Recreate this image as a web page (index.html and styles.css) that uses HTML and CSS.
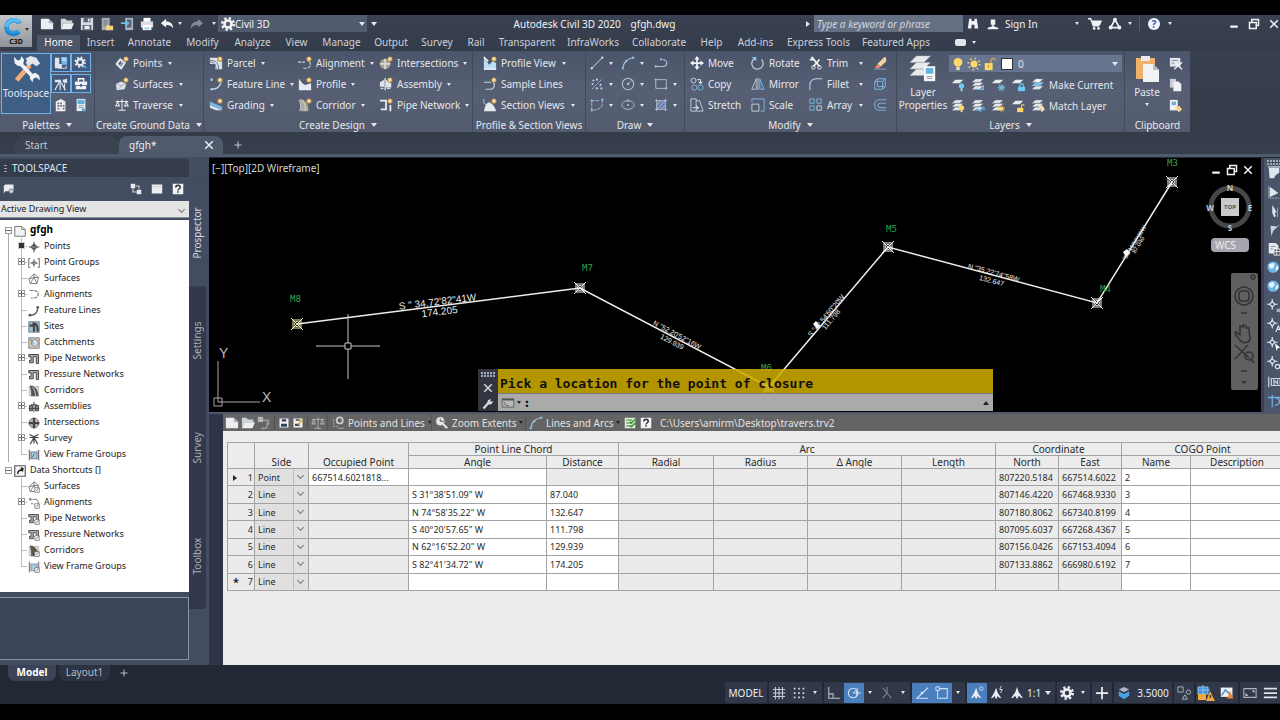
FILE: index.html
```html
<!DOCTYPE html>
<html lang="en">
<head>
<meta charset="utf-8">
<title>Autodesk Civil 3D 2020 - gfgh.dwg</title>
<link rel="stylesheet" href="styles.css">
</head>
<body>
<svg class="defs" aria-hidden="true">
<defs>
<g id="star"><circle cx="12.500" cy="3.500" r="3" fill="#b98f52"/><circle cx="12.500" cy="3.500" r="2" fill="#ffe09a"/></g>
<symbol id="new" viewBox="0 0 16 16"><path d="M1 2h9l5 5v7H1z" fill="#eceef1"/><path d="M10 2v5h5" fill="#aeb4bf"/></symbol>
<symbol id="open" viewBox="0 0 16 16"><path d="M1 14V2h5l2 2h6v3H4z" fill="#cfd3da"/><path d="M4 7h12l-3 7H1z" fill="#eceef1"/></symbol>
<symbol id="save" viewBox="0 0 16 16"><path d="M1 1h14v14H1z" fill="#d9dce2"/><path d="M4 1h8v5H4zM3 9h10v6H3z" fill="#59606d"/><path d="M5 10h6v4H5zM9 2h2v3H9z" fill="#eceef1"/></symbol>
<symbol id="saveas" viewBox="0 0 16 16"><path d="M2 1h9v14H2z" fill="#a9adb5"/><path d="M4 3h5v8H4z" fill="#8a8f99"/><path d="M7 9h3l1 1h4v5H7z" fill="#f2d27c"/></symbol>
<symbol id="webopen" viewBox="0 0 16 16"><path d="M6 1h9v14H6z" fill="#a9b3c2"/><path d="M8 3h5v9H8z" fill="#596273"/><path d="M1 6h5V3l5 4-5 4V8H1z" fill="#79b7e8"/></symbol>
<symbol id="print" viewBox="0 0 16 16"><path d="M4 1h8v5H4z" fill="#fff"/><path d="M1 5h14v7H1z" fill="#d8dbe1"/><path d="M3 9h10v6H3z" fill="#fff"/><path d="M5 12h6v2H5z" fill="#8ed0ee"/></symbol>
<symbol id="undo" viewBox="0 0 16 16"><path d="M1 7l6-5v3c5 0 8 3 8 8-2-3-4-4-8-4v3z" fill="currentColor"/></symbol>
<symbol id="redo" viewBox="0 0 16 16"><path d="M15 7L9 2v3c-5 0-8 3-8 8 2-3 4-4 8-4v3z" fill="currentColor"/></symbol>
<symbol id="gear" viewBox="0 0 16 16"><circle cx="8" cy="8" r="4" fill="none" stroke="currentColor" stroke-width="3"/><circle cx="8" cy="8" r="6.500" fill="none" stroke="currentColor" stroke-width="3" stroke-dasharray="2.600 2.500"/></symbol>
<symbol id="c3d" viewBox="0 0 24 24"><path d="M19 8C17 3 6 3 5 12c0 9 11 9 13 5" fill="none" stroke="#1b84cf" stroke-width="5"/><path d="M19 7C15 2 6 4 5 12" fill="none" stroke="#55bdf2" stroke-width="4"/><path d="M5 12c1 6 8 7 13 4" fill="none" stroke="#2d9be0" stroke-width="3"/></symbol>
<symbol id="binoc" viewBox="0 0 16 16"><path d="M3 1h3v3h4V1h3l2 13h-5V9H6v5H1z" fill="currentColor"/></symbol>
<symbol id="user" viewBox="0 0 16 16"><path d="M5 2h6v7H9v2l6 2v2H1v-2l6-2V9H5z" fill="currentColor"/></symbol>
<symbol id="cart" viewBox="0 0 16 16"><path d="M0 2h3l3 8h7" fill="none" stroke="currentColor" stroke-width="1.500"/><path d="M4 4h12l-2 5H6z" fill="currentColor"/><circle cx="7" cy="13" r="1.500" fill="currentColor"/><circle cx="12" cy="13" r="1.500" fill="currentColor"/></symbol>
<symbol id="a360" viewBox="0 0 16 16"><path d="M8 3l5 9H3z" fill="none" stroke="currentColor" stroke-width="2"/><circle cx="8" cy="3" r="2.200" fill="currentColor"/><circle cx="13" cy="12" r="2.200" fill="currentColor"/><circle cx="3" cy="12" r="2.200" fill="currentColor"/></symbol>
<symbol id="min" viewBox="0 0 16 16"><path d="M3 10h10v3H3z" fill="currentColor"/></symbol>
<symbol id="restore" viewBox="0 0 16 16"><path d="M5 5V2h9v8h-3M2 6h9v8H2z" fill="none" stroke="currentColor" stroke-width="2"/></symbol>
<symbol id="close" viewBox="0 0 16 16"><path d="M3 3l10 10M13 3L3 13" stroke="currentColor" stroke-width="2"/></symbol>
<symbol id="plus" viewBox="0 0 16 16"><path d="M8 1v14M1 8h14" stroke="currentColor" stroke-width="2"/></symbol>
<symbol id="tools" viewBox="0 0 32 32"><path d="M6 28L20 12" stroke="#f0ad7b" stroke-width="5"/><path d="M15 5l6-3 6 2 4 6-4 3-4-3-4 3-3-3 1-4z" fill="#e3e7ed"/><path d="M9 9l15 16" stroke="#eef1f5" stroke-width="4"/><path d="M3 3l4 4 3-1 1-4 3 4-1 5-5 2-4-3zM21 22l5-2 4 3 1 5-4-3-3 1-1 4-3-4z" fill="#eef1f5"/></symbol>
<symbol id="prosp" viewBox="0 0 16 16"><path d="M1 2h5v7h3v5H1z" fill="#dfe5ee"/><path d="M8 1h7v9H9z" fill="#74b8ea"/><path d="M9 3h5M9 5h5M5 14h9v-3" stroke="#e9eef5" fill="none"/></symbol>
<symbol id="sett" viewBox="0 0 16 16"><circle cx="7" cy="7" r="3.500" fill="none" stroke="#e6ebf2" stroke-width="2.500"/><circle cx="7" cy="7" r="5.500" fill="none" stroke="#e6ebf2" stroke-width="2" stroke-dasharray="2.200 2.100"/><path d="M10 10l4 4" stroke="#62ade6" stroke-width="2"/></symbol>
<symbol id="survey" viewBox="0 0 16 16"><path d="M1 3h7v3H1zM10 3l5-1v5l-5-1z" fill="#dfe5ee"/><path d="M6 6L1 15M7 6v9M8 6l5 9M12 7v8" stroke="#dfe5ee" stroke-width="1.300"/></symbol>
<symbol id="tbox" viewBox="0 0 16 16"><path d="M5 5V2h6v3" fill="none" stroke="#fff" stroke-width="1.500"/><path d="M1 5h14v4H1zM2 10h12v4H2z" fill="#eef1f5"/><path d="M7 8h2v3H7z" fill="#3c5a80"/></symbol>
<symbol id="sheet" viewBox="0 0 16 16"><path d="M2 4l6-3 5 3v11H2z" fill="#eef0f3"/><path d="M4 5h2v2H4zM7 5h2v2H7zM4 8h2v2H4zM7 8h2v2H7zM4 11h2v2H4zM10 8h2v2h-2zM10 11h2v2h-2z" fill="#687184"/></symbol>
<symbol id="props" viewBox="0 0 16 16"><path d="M3 1h10v14H3z" fill="#eef0f3"/><path d="M4 2h8v5H4z" fill="#5fb1e0"/><path d="M5 9h6M5 11h6" stroke="#8791a1"/><path d="M9 12h4v3H9z" fill="#58a5dc"/></symbol>
<symbol id="point" viewBox="0 0 16 16"><path d="M2 9l4-5 5 4-4 6z" fill="none" stroke="#dfe3ea" stroke-width="2.500"/><path d="M5 11l3-2-1-2" stroke="#dfe3ea" fill="none"/><use href="#star"/></symbol>
<symbol id="surf" viewBox="0 0 16 16"><path d="M1 8l6-3 6 3-2 6-9 1z" fill="#dfe3ea"/><path d="M1 8l6 2 6-2M7 10l-3 4" stroke="#a4abba" fill="none"/><use href="#star"/></symbol>
<symbol id="scales" viewBox="0 0 16 16"><path d="M8 1v13M4 14h8M1 4h14M3 4l-2 5h4zM13 4l-2 5h4z" stroke="currentColor" fill="none" stroke-width="1.200"/></symbol>
<symbol id="parcel" viewBox="0 0 16 16"><path d="M1 2h9v4h5v9H7V9H1z" fill="#dfe3ea"/><path d="M1 5c7 0 10 3 10 10M1 7c5 0 7 3 7 8" stroke="#5e6779" fill="none"/><use href="#star"/></symbol>
<symbol id="fline" viewBox="0 0 16 16"><path d="M3 14c7 0 10-3 11-9" stroke="#c9d0dc" fill="none" stroke-width="1.500"/><circle cx="3" cy="3" r="1.500" fill="#9ed0f3"/><circle cx="3" cy="14" r="1.500" fill="#9ed0f3"/><use href="#star"/></symbol>
<symbol id="grading" viewBox="0 0 16 16"><path d="M1 4l14 6v4L1 8z" fill="#74b8e6"/><path d="M1 8l14 6H8L1 11z" fill="#d9e6f2"/><use href="#star"/></symbol>
<symbol id="align" viewBox="0 0 16 16"><path d="M0 7h8M6 14h4c6-1 5-8 1-8" stroke="#c9d0dc" fill="none" stroke-width="1.300" stroke-dasharray="4 1"/><use href="#star"/></symbol>
<symbol id="profile" viewBox="0 0 16 16"><path d="M1 2l4 5 3 2 7-2v8H1z" fill="#e6eaf0"/><use href="#star"/></symbol>
<symbol id="corr" viewBox="0 0 16 16"><path d="M2 1l4 1c5 3 6 7 6 13H3c1-5 0-9-1-14z" fill="#aaa99f"/><path d="M4 2c4 4 5 8 4 13" stroke="#e8dcae" fill="none"/><path d="M1 2c2 3 3 8 1 13" stroke="#dfe3ea" fill="none"/><use href="#star"/></symbol>
<symbol id="inter" viewBox="0 0 16 16"><circle cx="7" cy="9" r="6" fill="#a8a39b"/><path d="M7 3v12M1 9h12" stroke="#ddd8cc" stroke-width="2"/><use href="#star"/></symbol>
<symbol id="assem" viewBox="0 0 16 16"><path d="M1 6l5-3v8H1zM8 3l6 4v5H8z" fill="#dfe3ea"/><path d="M7 1v14M2 13h3M9 13h4" stroke="#dfe3ea" stroke-width="1.500"/><use href="#star"/></symbol>
<symbol id="pipe" viewBox="0 0 16 16"><path d="M1 3h7v10H2M13 8v7" stroke="#e9ecf1" stroke-width="2" fill="none"/><use href="#star"/></symbol>
<symbol id="pview" viewBox="0 0 16 16"><path d="M1 1v14h14V8l-4-2-4 4z" fill="#bcdff5"/><path d="M1 1l5 5M1 15h14" stroke="#fff" stroke-width="1.500"/><use href="#star"/></symbol>
<symbol id="sline" viewBox="0 0 16 16"><path d="M1 6h8M3 14h6c5-1 5-7 2-8" stroke="#c9d0dc" fill="none" stroke-width="1.300"/><use href="#star"/></symbol>
<symbol id="sview" viewBox="0 0 16 16"><path d="M1 15c2-9 4-10 6-10s6 3 8 10z" fill="#e6eaf0"/><path d="M1 1v5l3 2" stroke="#a7d4f1" fill="none"/><use href="#star"/></symbol>
<symbol id="line" viewBox="0 0 16 16"><path d="M2 14L14 2" stroke="#b9c1ce" stroke-width="1.200"/><circle cx="2" cy="14" r="1.300" fill="#cfe1f1"/><circle cx="14" cy="2" r="1.300" fill="#cfe1f1"/></symbol>
<symbol id="arc" viewBox="0 0 16 16"><path d="M2 14C3 7 7 3 14 2" stroke="#b9c1ce" stroke-width="1.200" fill="none"/><circle cx="2" cy="14" r="1.300" fill="#8cc5f0"/><circle cx="6" cy="6" r="1.300" fill="#8cc5f0"/><circle cx="14" cy="2" r="1.300" fill="#8cc5f0"/></symbol>
<symbol id="pline" viewBox="0 0 16 16"><path d="M1 12h9c6 0 6-7 0-8" stroke="#b9c1ce" stroke-width="1.300" fill="none"/><circle cx="2" cy="12" r="1.300" fill="#8cc5f0"/><circle cx="8" cy="4" r="1.300" fill="#8cc5f0"/></symbol>
<symbol id="pts" viewBox="0 0 16 16"><path d="M2 14L14 2" stroke="#b9c1ce" stroke-dasharray="3 1"/><g fill="#b5d4ed"><circle cx="4" cy="4" r="1.200"/><circle cx="8" cy="3" r="1.200"/><circle cx="3" cy="8" r="1.200"/><circle cx="12" cy="9" r="1.200"/><circle cx="8" cy="13" r="1.200"/><circle cx="13" cy="13" r="1.200"/></g></symbol>
<symbol id="circ" viewBox="0 0 16 16"><circle cx="8" cy="8" r="6.500" stroke="#b9c1ce" fill="none" stroke-width="1.200"/><path d="M8 8l4-4" stroke="#8cc5f0"/><circle cx="8" cy="8" r="1.200" fill="#cfe1f1"/></symbol>
<symbol id="rect" viewBox="0 0 16 16"><path d="M2 3h12v10H2z" stroke="#b9c1ce" fill="none"/><circle cx="2" cy="3" r="1.300" fill="#8cc5f0"/><circle cx="14" cy="13" r="1.300" fill="#8cc5f0"/></symbol>
<symbol id="poly3" viewBox="0 0 16 16"><path d="M2 14V3h8M14 2v5c-1 5-5 7-12 7" stroke="#b9c1ce" fill="none" stroke-dasharray="4 1"/><circle cx="2" cy="3" r="1.300" fill="#8cc5f0"/><circle cx="14" cy="2" r="1.300" fill="#8cc5f0"/><circle cx="2" cy="14" r="1.300" fill="#8cc5f0"/></symbol>
<symbol id="ellipse" viewBox="0 0 16 16"><ellipse cx="8" cy="8" rx="7" ry="5" stroke="#b9c1ce" fill="none"/><circle cx="8" cy="8" r="1.200" fill="#8cc5f0"/><circle cx="8" cy="3" r="1.200" fill="#8cc5f0"/></symbol>
<symbol id="hatch" viewBox="0 0 16 16"><path d="M3 3h10v10H3z" fill="#6a7fae"/><path d="M3 8l5-5M3 13L13 3M8 13l5-5" stroke="#a9bbe4"/><path d="M3 1v14M13 1v14M1 3h14M1 13h14" stroke="#b9c1ce"/></symbol>
<symbol id="move" viewBox="0 0 16 16"><path d="M8 0l3 4H9v3h3V5l4 3-4 3V9H9v3h2l-3 4-3-4h2V9H4v2L0 8l4-3v2h3V4H5z" fill="#f0f3f7"/></symbol>
<symbol id="copy" viewBox="0 0 16 16"><circle cx="4" cy="4" r="2.800" stroke="#d3d8e0" fill="none"/><circle cx="5" cy="12" r="3" stroke="#7fbcec" fill="none"/><circle cx="12" cy="12" r="3" stroke="#7fbcec" fill="none"/><path d="M8 3h4v4M10 5l2 3 2-3" stroke="#e8ebf0" fill="none"/></symbol>
<symbol id="stretch" viewBox="0 0 16 16"><path d="M1 1h6v14H1zM7 3h4l4 12H7" stroke="#c6d3e2" fill="none"/><path d="M3 11h7M7 9l3 2-3 2" stroke="#e8ebf0" fill="none"/></symbol>
<symbol id="rotate" viewBox="0 0 16 16"><path d="M4 3a6.500 6.500 0 1 0 8 1" stroke="#c6cdd8" fill="none" stroke-width="1.400"/><path d="M1 1h5v5z" fill="#8cc5f0"/></symbol>
<symbol id="mirror" viewBox="0 0 16 16"><path d="M6 2L1 14h5zM8 1v14" stroke="#c6cdd8" fill="none"/><path d="M10 2l5 12h-5z" stroke="#7fbcec" fill="#44739c"/></symbol>
<symbol id="scale" viewBox="0 0 16 16"><path d="M1 7h8v8H1z" stroke="#d3d8e0" fill="none"/><path d="M1 5V1h14v14h-4" stroke="#7fbcec" fill="none"/></symbol>
<symbol id="trim" viewBox="0 0 16 16"><path d="M3 1l9 11M12 4l-7 8M1 4h4" stroke="#f1f3f6" stroke-width="2"/><circle cx="12" cy="13" r="2" stroke="#f1f3f6" fill="none"/><circle cx="5" cy="13" r="2" stroke="#f1f3f6" fill="none"/></symbol>
<symbol id="fillet" viewBox="0 0 16 16"><path d="M1 15V9c0-5 4-7 8-7h6" stroke="#c6cdd8" fill="none" stroke-width="1.200"/><path d="M1 9c0-5 4-7 8-7" stroke="#7fbcec" fill="none"/></symbol>
<symbol id="array" viewBox="0 0 16 16"><path d="M1 1h5v5H1zM9 1h5v5H9zM1 9h5v5H1z" stroke="#7fbcec" fill="none"/><path d="M9 9h5v5H9z" stroke="#d3d8e0" fill="none"/></symbol>
<symbol id="erase" viewBox="0 0 16 16"><path d="M13 1l2 1v4l-6 6-4-3z" fill="#f6d19c"/><path d="M5 9l4 3-2 2H2z" fill="#e4896a"/><path d="M2 15h13" stroke="#8aa8cc"/></symbol>
<symbol id="explode" viewBox="0 0 16 16"><path d="M2 5h9v9H2zM2 5l3-3h9v9l-3 3M11 5l3-3M5 2v9M5 11h9" stroke="#7fbcec" fill="none"/></symbol>
<symbol id="offset" viewBox="0 0 16 16"><path d="M15 2H7c-7 0-7 12 0 12h8M15 6H8c-3 0-3 5 0 5h7" stroke="#7fa6d0" fill="none" stroke-width="1.300"/></symbol>
<symbol id="layerbig" viewBox="0 0 32 32"><path d="M9 2h15l-7 7H2zM9 9h15l-7 7H2zM9 16h15l-7 7H2z" fill="#e8e9eb" stroke="#9da3ae" stroke-width=".5"/><path d="M17 13h12v16H17z" fill="#f6f7f8"/><path d="M19 15h8v6h-8z" fill="#5fb1e0"/><path d="M20 24h6M20 26h6" stroke="#8d95a3"/></symbol>
<symbol id="bulb" viewBox="0 0 16 16"><circle cx="8" cy="6" r="5" fill="#ffd867"/><path d="M6 11h4v4H6z" fill="#e0d9b5"/></symbol>
<symbol id="sun" viewBox="0 0 16 16"><circle cx="8" cy="8" r="4" fill="#ffd867"/><circle cx="8" cy="8" r="6.500" fill="none" stroke="#ffd867" stroke-width="2" stroke-dasharray="1.500 3.600"/></symbol>
<symbol id="lock" viewBox="0 0 16 16"><path d="M9 7V4c0-3 5-3 5 0" stroke="#e2a05a" fill="none" stroke-width="1.500"/><path d="M2 7h9v8H2z" fill="#ffd867"/><path d="M6 9v3" stroke="#a87b26"/></symbol>
<g id="sheet1"><path d="M5 2h9l-4 4H1z" fill="#e8e9eb"/></g>
<g id="stack"><path d="M5 1h9l-4 4H1zM5 5h9l-4 4H1zM5 9h9l-4 4H1z" fill="#e8e9eb" stroke="#6c7486" stroke-width=".6"/></g>
<symbol id="l1" viewBox="0 0 16 16"><use href="#sheet1"/><circle cx="12" cy="9" r="3" fill="#6bcdf5"/><path d="M11 12h2v3h-2z" fill="#b9e2f5"/></symbol>
<symbol id="l2" viewBox="0 0 16 16"><use href="#stack"/><path d="M8 13h6V8" stroke="#7cc3f2" fill="none" stroke-width="1.500"/></symbol>
<symbol id="l3" viewBox="0 0 16 16"><use href="#sheet1"/><path d="M12 7v8M8 11h8M9 8l6 6M15 8l-6 6" stroke="#6bb6de" stroke-width="1.300"/></symbol>
<symbol id="l4" viewBox="0 0 16 16"><use href="#sheet1"/><path d="M10 10V8c0-2 4-2 4 0v2" stroke="#6bcdf5" fill="none" stroke-width="1.300"/><path d="M8 10h8v5H8z" fill="#6bcdf5"/></symbol>
<symbol id="l5" viewBox="0 0 16 16"><use href="#stack"/><path d="M5 5h9l-4 4H1z" fill="#79bff0"/><circle cx="8" cy="3" r="2" fill="#fff"/></symbol>
<symbol id="l6" viewBox="0 0 16 16"><use href="#stack"/><circle cx="12" cy="10" r="3" fill="#ffd867"/><path d="M11 13h2v2h-2z" fill="#fff1bd"/></symbol>
<symbol id="l7" viewBox="0 0 16 16"><use href="#stack"/><path d="M5 12h4M10 15l5-6M15 9v4" stroke="#5ba6e2" fill="none" stroke-width="1.500"/></symbol>
<symbol id="l8" viewBox="0 0 16 16"><use href="#stack"/><circle cx="12" cy="11" r="2.500" fill="#ffd867"/><circle cx="12" cy="11" r="3.700" stroke="#ffd867" fill="none" stroke-dasharray="1 2"/></symbol>
<symbol id="l9" viewBox="0 0 16 16"><use href="#sheet1"/><path d="M12 10V8c0-2 3-2 3 0" stroke="#ffb765" fill="none" stroke-width="1.300"/><path d="M7 10h7v5H7z" fill="#ffd867"/></symbol>
<symbol id="l10" viewBox="0 0 16 16"><use href="#stack"/><path d="M9 8l4-1 3 5-4 3z" fill="#f0dfb6"/></symbol>
<symbol id="paste" viewBox="0 0 24 28"><path d="M1 3h19v21H1z" fill="#f0b06a"/><path d="M6 1h9v5H6z" fill="#e8eaee"/><path d="M8 9h10l6 6v12H8z" fill="#f1f2f4"/><path d="M18 9v6h6z" fill="#b6bcc6"/></symbol>
<symbol id="cut" viewBox="0 0 16 16"><path d="M1 1h12v10H1z" fill="#dfe3ea"/><path d="M3 4h7M3 7h5" stroke="#7d8697"/><path d="M6 6l9 8M15 6l-9 8" stroke="#f6f7f9" stroke-width="1.500"/></symbol>
<symbol id="copyc" viewBox="0 0 16 16"><path d="M1 1h7v10H1z" fill="#c8cdd6"/><path d="M5 4h6l3 3v8H5z" fill="#f1f2f4"/></symbol>
<symbol id="pspec" viewBox="0 0 16 16"><path d="M1 1h9v12H1z" fill="#eef0f3"/><path d="M3 3h5v4H3z" fill="#6ab2e6"/><path d="M7 9l5-1 3 4-4 3z" fill="#f3d48c"/></symbol>
<symbol id="t-doc" viewBox="0 0 16 16"><path d="M1 2h9l5 4v9H1z" fill="#f4f4f4" stroke="#777" stroke-width="1.300"/><path d="M10 2v4h5" stroke="#777" fill="none"/></symbol>
<symbol id="t-point" viewBox="0 0 16 16"><path d="M8 1v14M1 8h14M8 4l4 4-4 4-4-4z" stroke="#555" fill="none" stroke-width="1.500"/></symbol>
<symbol id="t-pg" viewBox="0 0 16 16"><path d="M3 2H1v12h2M13 2h2v12h-2M8 3v10M3 8h10M8 5l3 3-3 3-3-3z" stroke="#666" fill="none" stroke-width="1.300"/></symbol>
<symbol id="t-surf" viewBox="0 0 16 16"><path d="M8 1l6 5-2 8H3L1 8zM1 8l7-2 6 0M8 1v5l4 8M8 6l-5 8" stroke="#777" fill="none" stroke-width="1.200"/></symbol>
<symbol id="t-align" viewBox="0 0 16 16"><path d="M2 2h5c9 0 9 10 0 10H4" stroke="#777" fill="none" stroke-width="1.500" stroke-dasharray="5 1"/></symbol>
<symbol id="t-fl" viewBox="0 0 16 16"><path d="M2 14c8 0 11-4 11-11" stroke="#555" fill="none" stroke-width="1.800"/><circle cx="2.500" cy="13.500" r="1.800" fill="#555"/><circle cx="13" cy="3" r="1.800" fill="#555"/></symbol>
<symbol id="t-site" viewBox="0 0 16 16"><path d="M1 1h14v14H1z" fill="#9dc0d8" stroke="#666"/><path d="M2 6h6v8M6 3c6 0 7 4 7 11" stroke="#444" fill="none" stroke-width="3"/></symbol>
<symbol id="t-catch" viewBox="0 0 16 16"><path d="M1 1h14v14H1z" fill="#e8c69c" stroke="#4d6f93"/><circle cx="9" cy="8" r="4.500" fill="#d3e5f3" stroke="#55799c"/><path d="M3 2l5 8" stroke="#55799c"/></symbol>
<symbol id="t-pipe" viewBox="0 0 16 16"><path d="M1 2h13v12h-3V5H7v8H2v-3h2V5H1z" fill="#aaa" stroke="#444" stroke-width="1.300"/></symbol>
<symbol id="t-corr" viewBox="0 0 16 16"><path d="M1 1h14v14H1z" fill="#ccc"/><path d="M2 1h4c6 4 8 8 8 14H4c1-5 0-10-2-14z" fill="#555"/><path d="M6 3c3 4 4 7 4 12" stroke="#eee" fill="none"/></symbol>
<symbol id="t-assem" viewBox="0 0 16 16"><path d="M2 6h4v7H2zM10 6h4v7h-4zM8 1v14M4 5h8M1 10h14" fill="#888" stroke="#444" stroke-width="1.300"/></symbol>
<symbol id="t-inter" viewBox="0 0 16 16"><circle cx="8" cy="8" r="6.500" fill="#bbb" stroke="#555"/><path d="M8 1v14M1 8h14" stroke="#444" stroke-width="3"/></symbol>
<symbol id="t-survey" viewBox="0 0 16 16"><path d="M2 2l6 3 6-3M2 6h12M8 6l-5 9M8 6v8M8 6l5 9" stroke="#444" fill="none" stroke-width="1.600"/></symbol>
<symbol id="t-vfg" viewBox="0 0 16 16"><path d="M2 1v14M14 1v14" stroke="#777" stroke-width="2"/><path d="M4 4h8v9H4z" fill="#a9cde2" stroke="#557"/><path d="M5 12l4-6" stroke="#446"/></symbol>
<symbol id="t-short" viewBox="0 0 16 16"><path d="M1 1h14v14H1z" fill="#f7f7f7" stroke="#555" stroke-width="1.500"/><path d="M4 12c0-4 2-6 5-6V3l4 1-1 5-2-1c-3 0-4 1-4 4z" fill="#222"/></symbol>
<g id="badge"><path d="M9 9h6v6H9z" fill="#fff" stroke="#666"/><path d="M11 13l3-3" stroke="#444"/></g>
<symbol id="d-surf" viewBox="0 0 16 16"><path d="M8 1l6 5-2 8H3L1 8zM1 8l7-2 6 0M8 1v5l4 8M8 6l-5 8" stroke="#777" fill="none" stroke-width="1.200"/><use href="#badge"/></symbol>
<symbol id="d-align" viewBox="0 0 16 16"><path d="M1 3h9M3 1v4M9 3c4 0 5 3 5 6M4 9h3" stroke="#777" fill="none" stroke-width="1.400" stroke-dasharray="5 1"/><use href="#badge"/></symbol>
<symbol id="d-pipe" viewBox="0 0 16 16"><path d="M1 2h13v12h-3V5H7v8H2v-3h2V5H1z" fill="#aaa" stroke="#555" stroke-width="1.300"/><use href="#badge"/></symbol>
<symbol id="d-corr" viewBox="0 0 16 16"><path d="M1 1h14v14H1z" fill="#ccc"/><path d="M2 1h4c6 4 8 8 8 14H4c1-5 0-10-2-14z" fill="#5c5746"/><use href="#badge"/></symbol>
<symbol id="d-vfg" viewBox="0 0 16 16"><path d="M2 1v14M14 1v14" stroke="#888" stroke-width="2"/><path d="M4 4h8v9H4z" fill="#a9cde2" stroke="#779"/><use href="#badge"/></symbol>
<symbol id="help" viewBox="0 0 16 16"><path d="M1 1h14v14H1z" fill="#f3f4f6"/><path d="M5 6c0-4 6-4 6 0 0 2-3 2-3 4M8 11v2" stroke="#2e3340" stroke-width="2" fill="none"/></symbol>
<symbol id="tree2" viewBox="0 0 16 16"><path d="M1 1h6v6H1zM9 9h6v6H9z" fill="#e8ebf0"/><path d="M4 7v5h5M8 4h4v4" stroke="#c9ced8" fill="none" stroke-width="1.500"/></symbol>
<symbol id="pane" viewBox="0 0 16 16"><path d="M1 2h14v12H1z" fill="#eceef2"/><path d="M2 5h12" stroke="#b9bec8"/></symbol>
<symbol id="refresh" viewBox="0 0 16 16"><path d="M3 2h11v9H3l-2 3V4z" fill="#e8ebf0"/><circle cx="11" cy="11" r="3" fill="#cfd5df" stroke="#535c6f"/></symbol>
<symbol id="link" viewBox="0 0 16 16"><path d="M1 1h6v6H1z" fill="#b5b5b5"/><path d="M7 5h6v5M5 14h4c3 0 3-4 3-7" stroke="#9a9a9a" fill="none" stroke-width="2"/></symbol>
<symbol id="disk" viewBox="0 0 16 16"><path d="M2 2h12v12H2z" fill="#f1f1f1"/><path d="M5 3h6v3H5zM4 9h8v4H4z" fill="#34445e"/></symbol>
<symbol id="diskp" viewBox="0 0 16 16"><path d="M2 2h12v12H2z" fill="#f1f1f1"/><path d="M4 9h6v3H4zM5 3h5v2H5z" fill="#444"/><path d="M8 10l6-7" stroke="#e4b13f" stroke-width="2.500"/></symbol>
<symbol id="plset" viewBox="0 0 16 16"><path d="M3 3v9h5" stroke="#aaa" stroke-dasharray="3 1" fill="none"/><circle cx="10" cy="5" r="3.500" stroke="#ccc" fill="none" stroke-width="2"/><path d="M8 14h7" stroke="#aaa"/></symbol>
<symbol id="zoomx" viewBox="0 0 16 16"><circle cx="6" cy="6" r="4.500" fill="#e9e9e9" stroke="#cfcfcf"/><path d="M6 3v3h4" stroke="#444" fill="none"/><path d="M9 9l5 5" stroke="#ddd" stroke-width="2.500"/></symbol>
<symbol id="check" viewBox="0 0 16 16"><path d="M1 1h14v14H1z" fill="#e2efd9"/><path d="M3 4h8M3 8h8M3 12h8" stroke="#37843a" stroke-width="1.500"/><path d="M8 6l2 2 5-5M8 11l2 2 5-5" stroke="#2d9a34" stroke-width="2" fill="none"/></symbol>
<symbol id="wrench" viewBox="0 0 16 16"><path d="M2 14l7-8" stroke="currentColor" stroke-width="3"/><path d="M8 3l4-2-1 3 1 1 3-1-2 4-4 1-2-3z" fill="currentColor"/></symbol>
<symbol id="s-grid" viewBox="0 0 16 16"><path d="M4 1v14M8 1v14M12 1v14M1 4h14M1 8h14M1 12h14" stroke="#c6ccd6" stroke-width="1.200"/></symbol>
<symbol id="s-snap" viewBox="0 0 16 16"><path d="M2 3h12M2 8h12M2 13h12" stroke="#d0d5dd" stroke-width="2" stroke-dasharray="2 3"/></symbol>
<symbol id="s-ortho" viewBox="0 0 16 16"><path d="M2 1v13h13M2 9h5v5" stroke="#b9c0cb" fill="none" stroke-width="1.200"/></symbol>
<symbol id="s-polar" viewBox="0 0 16 16"><circle cx="7" cy="8" r="5.500" stroke="#d9e6f5" fill="none" stroke-width="1.200"/><path d="M7 8h9M7 8l6-6M11 5v6" stroke="#d9e6f5"/></symbol>
<symbol id="s-iso" viewBox="0 0 16 16"><path d="M3 2l10 12M8 1v7l-5 6" stroke="#828a97" fill="none" stroke-width="1.200"/></symbol>
<symbol id="s-otrack" viewBox="0 0 16 16"><path d="M15 2L2 14h13" stroke="#cfe2f7" fill="none" stroke-width="1.200"/><circle cx="8" cy="8" r="1.500" fill="#d9e6f5"/></symbol>
<symbol id="s-osnap" viewBox="0 0 16 16"><path d="M4 3h10v11H3V5" stroke="#cfe2f7" fill="none" stroke-width="1.200"/><path d="M1 1h4v4H1z" fill="#4a7ab8" stroke="#e6effa"/></symbol>
<symbol id="s-anno" viewBox="0 0 16 16"><path d="M8 1l2 6 5 7-3-1-2-2-2 4-2-4-2 2-3 1 5-7z" fill="#e9ecf1"/></symbol>
<symbol id="s-annov" viewBox="0 0 16 16"><path d="M7 2l2 6 4 6-3-1-1-2-2 4-2-4-1 2-3 1 4-7z" fill="#e9ecf1"/><circle cx="13" cy="3" r="2" stroke="#cfe2f7" fill="none"/></symbol>
<symbol id="s-annoa" viewBox="0 0 16 16"><path d="M7 2l2 6 4 6-3-1-1-2-2 4-2-4-1 2-3 1 4-7z" fill="#e9ecf1"/><path d="M13 0l-2 4h3l-2 4" stroke="#e9ecf1" fill="none"/></symbol>
<symbol id="s-lay" viewBox="0 0 16 16"><path d="M8 1l6 3-6 3-6-3z" fill="#aab4c2"/><path d="M2 6l6 3 6-3v5l-6 4-6-4z" fill="#4ba3e6"/></symbol>
<symbol id="s-units" viewBox="0 0 16 16"><path d="M1 1h6v6H1zM6 15l3-5 3 5z" stroke="#b9c0cb" fill="none"/><circle cx="13" cy="7" r="2.500" stroke="#b9c0cb" fill="none"/></symbol>
<symbol id="s-geo" viewBox="0 0 18 18"><path d="M1 3h10v7H1zM6 1v10M1 6h12" fill="#3f8ed8" stroke="#8bc3f0"/><path d="M1 10h8v6H1zM13 7l5 10H9z" fill="#f2a83c"/><path d="M13.500 11v3" stroke="#5b3712" stroke-width="1.500"/></symbol>
<symbol id="s-img" viewBox="0 0 18 18"><path d="M1 2h15v12H1z" fill="#f0f1f3"/><path d="M2 12l5-7 7 7" stroke="#4c93c9" stroke-width="2" fill="none"/><path d="M13 6l4 10h-8z" fill="#e98b3b"/></symbol>
<symbol id="s-clean" viewBox="0 0 16 16"><path d="M1 3h14v10H1z" stroke="#aab1bd" fill="none" stroke-width="1.200"/><path d="M10 5h3v3zM3 11V8l3 3z" fill="#e9ecf1"/></symbol>
<symbol id="s-menu" viewBox="0 0 16 16"><path d="M1 3h15M1 8h15M1 13h15" stroke="#dfe2e8" stroke-width="2"/></symbol>
<symbol id="r-1" viewBox="0 0 16 16"><path d="M2 2h12v6c-3 1-5 3-6 6H3z" fill="#dfe7ee"/><path d="M1 1h14" stroke="#fff"/></symbol>
<symbol id="r-2" viewBox="0 0 16 16"><path d="M3 2l10 7-10 5z" fill="#e3e8ee"/><path d="M2 1v14h13" stroke="#b3bcc9" stroke-dasharray="2 1" fill="none"/></symbol>
<symbol id="r-3" viewBox="0 0 16 16"><path d="M6 1l5 8-2 1 1 4-2 1-2-5z" fill="#dfe7ee"/><path d="M12 4v11" stroke="#8bb8dd"/></symbol>
<symbol id="r-4" viewBox="0 0 16 16"><path d="M4 3l8 1-5 5-2 6z" fill="#ccd4de"/><path d="M9 7l5-5" stroke="#8bb8dd"/></symbol>
<symbol id="r-5" viewBox="0 0 16 16"><path d="M2 1h8l3 3v9H2z" fill="#e6eaef"/><path d="M4 5h6M4 8h3" stroke="#7c8798"/><path d="M8 8h7v7H8zM11 8v7M8 11h7" fill="#4f596c" stroke="#eee"/></symbol>
<symbol id="r-6" viewBox="0 0 16 16"><circle cx="7" cy="7" r="6.500" fill="#6bb5e8"/><path d="M2 4l5-2 2 3-3 4-3-1zM10 7l3-2v4l-3 3z" fill="#e6f2fa"/></symbol>
<g id="cogo"><path d="M6 0v12M0 6h12" stroke="#e3e7ee" stroke-width="1.400"/><path d="M6 3l3 3-3 3-3-3z" fill="#4b5569" stroke="#e3e7ee" stroke-width="1.400"/></g>
<symbol id="r-7" viewBox="0 0 16 16"><use href="#cogo"/><path d="M11 11h4v4h-4z" fill="#9fb1c8"/></symbol>
<symbol id="r-7a" viewBox="0 0 16 16"><use href="#cogo"/><path d="M10 16l3-7 3 7M11 13h4" stroke="#dfe4eb" fill="none" stroke-width="1.300"/></symbol>
<symbol id="r-7b" viewBox="0 0 16 16"><use href="#cogo"/><path d="M9 7l6 5-3 1-1 3z" fill="#fff"/></symbol>
<symbol id="r-7c" viewBox="0 0 16 16"><use href="#cogo"/><circle cx="12" cy="12" r="2.500" stroke="#dfe4eb" fill="none" stroke-width="1.300"/></symbol>
<symbol id="r-8" viewBox="0 0 16 16"><path d="M2 2v12M5 4h10v8H5zM8 12V6l4 4V5" stroke="#c9d1dc" fill="none" stroke-width="1.400"/></symbol>
<symbol id="r-9" viewBox="0 0 16 16"><path d="M1 4h14M6 1v14M9 4c7 1 7 8 0 9" stroke="#72aee0" fill="none" stroke-width="1.500"/></symbol>
<g id="node"><path d="M-4 -4h8v8h-8zM-6 -6L6 6M6 -6L-6 6" fill="none" stroke="currentColor" stroke-width="1"/><circle r="2.500" fill="none" stroke="currentColor"/></g>
</defs>
</svg>

<div class="app">
<header class="titlebar">
  <button class="appmenu" aria-label="Application menu"><svg class="logo"><use href="#c3d"/></svg><b>C3D</b><i class="caret"></i></button>
  <div class="titlerow">
    <div class="qat">
      <button aria-label="New"><svg><use href="#new"/></svg></button>
      <button aria-label="Open"><svg><use href="#open"/></svg></button>
      <button aria-label="Save"><svg><use href="#save"/></svg></button>
      <button aria-label="Save as"><svg><use href="#saveas"/></svg></button>
      <button aria-label="Open from web"><svg><use href="#webopen"/></svg></button>
      <button aria-label="Plot"><svg><use href="#print"/></svg></button>
      <button aria-label="Undo"><svg><use href="#undo"/></svg></button>
    </div>
    <i class="caret"></i>
    <button class="redo" aria-label="Redo"><svg class="i14"><use href="#redo"/></svg></button>
    <i class="caret"></i>
    <div class="workspace"><svg class="i14"><use href="#gear"/></svg><select aria-label="Workspace"><option>Civil 3D</option></select><i class="caret big"></i></div>
    <i class="caret big over"></i>
    <div class="apptitle"><span>Autodesk Civil 3D 2020</span><span>gfgh.dwg</span></div>
    <i class="caret side"></i>
    <input class="search" type="text" placeholder="Type a keyword or phrase" aria-label="Search">
    <div class="account">
      <svg class="i12"><use href="#binoc"/></svg><svg class="i12"><use href="#user"/></svg><a href="#signin">Sign In</a>
    </div>
    <i class="caret"></i>
    <div class="links"><svg class="i14"><use href="#cart"/></svg><svg class="i14"><use href="#a360"/></svg><i class="caret"></i></div>
    <div class="helpbox"><button class="helpbtn" aria-label="Help">?</button><i class="caret"></i></div>
    <div class="winbtns"><button aria-label="Minimize"><svg class="i12"><use href="#min"/></svg></button><button aria-label="Restore"><svg class="i12"><use href="#restore"/></svg></button><button aria-label="Close"><svg class="i12"><use href="#close"/></svg></button></div>
  </div>
  <nav class="menu">
    <a class="on" href="#home">Home</a><a href="#insert">Insert</a><a href="#annotate">Annotate</a><a href="#modify">Modify</a><a href="#analyze">Analyze</a><a href="#view">View</a><a href="#manage">Manage</a><a href="#output">Output</a><a href="#survey-tab">Survey</a><a href="#rail">Rail</a><a href="#transparent">Transparent</a><a href="#infraworks">InfraWorks</a><a href="#collaborate">Collaborate</a><a href="#helptab">Help</a><a href="#addins">Add-ins</a><a href="#express">Express Tools</a><a href="#featured">Featured Apps</a>
    <button class="ribmin" aria-label="Minimize ribbon"><span></span><i class="caret"></i></button>
  </nav>
</header>

<div class="ribbon">
  <section class="panel p-pal">
    <div class="pbody">
      <button class="toolspacebtn"><svg><use href="#tools"/></svg>Toolspace</button>
      <div class="six">
        <button class="on" aria-label="Prospector"><svg class="i14"><use href="#prosp"/></svg></button><button class="on" aria-label="Settings"><svg class="i14"><use href="#sett"/></svg></button>
        <button class="on" aria-label="Survey"><svg class="i14"><use href="#survey"/></svg></button><button class="on" aria-label="Toolbox"><svg class="i14"><use href="#tbox"/></svg></button>
        <button aria-label="Sheet set"><svg class="i14"><use href="#sheet"/></svg></button><button aria-label="Properties"><svg class="i14"><use href="#props"/></svg></button>
      </div>
    </div>
    <h2>Palettes<i class="caret big"></i></h2>
  </section>
  <section class="panel p-ground">
    <div class="pbody cols">
      <button><svg><use href="#point"/></svg>Points<i class="caret"></i></button>
      <button><svg><use href="#surf"/></svg>Surfaces<i class="caret"></i></button>
      <button><svg><use href="#scales"/></svg>Traverse<i class="caret"></i></button>
    </div>
    <h2>Create Ground Data<i class="caret big"></i></h2>
  </section>
  <section class="panel p-design">
    <div class="pbody cols">
      <button><svg><use href="#parcel"/></svg>Parcel<i class="caret"></i></button>
      <button><svg><use href="#fline"/></svg>Feature Line<i class="caret"></i></button>
      <button><svg><use href="#grading"/></svg>Grading<i class="caret"></i></button>
      <button><svg><use href="#align"/></svg>Alignment<i class="caret"></i></button>
      <button><svg><use href="#profile"/></svg>Profile<i class="caret"></i></button>
      <button><svg><use href="#corr"/></svg>Corridor<i class="caret"></i></button>
      <button><svg><use href="#inter"/></svg>Intersections<i class="caret"></i></button>
      <button><svg><use href="#assem"/></svg>Assembly<i class="caret"></i></button>
      <button><svg><use href="#pipe"/></svg>Pipe Network<i class="caret"></i></button>
    </div>
    <h2>Create Design<i class="caret big"></i></h2>
  </section>
  <section class="panel p-prof">
    <div class="pbody cols">
      <button><svg><use href="#pview"/></svg>Profile View<i class="caret"></i></button>
      <button><svg><use href="#sline"/></svg>Sample Lines</button>
      <button><svg><use href="#sview"/></svg>Section Views<i class="caret"></i></button>
    </div>
    <h2>Profile &amp; Section Views</h2>
  </section>
  <section class="panel p-draw">
    <div class="pbody cols">
      <button aria-label="Line"><svg><use href="#line"/></svg><i class="caret"></i></button>
      <button aria-label="Points"><svg><use href="#pts"/></svg><i class="caret"></i></button>
      <button aria-label="Curve"><svg><use href="#poly3"/></svg><i class="caret"></i></button>
      <button aria-label="Arc"><svg><use href="#arc"/></svg><i class="caret"></i></button>
      <button aria-label="Circle"><svg><use href="#circ"/></svg><i class="caret"></i></button>
      <button aria-label="Ellipse"><svg><use href="#ellipse"/></svg><i class="caret"></i></button>
      <button aria-label="Polyline"><svg><use href="#pline"/></svg></button>
      <button aria-label="Rectangle"><svg><use href="#rect"/></svg><i class="caret"></i></button>
      <button aria-label="Hatch"><svg><use href="#hatch"/></svg><i class="caret"></i></button>
    </div>
    <h2>Draw<i class="caret big"></i></h2>
  </section>
  <section class="panel p-mod">
    <div class="pbody cols">
      <button><svg><use href="#move"/></svg>Move</button>
      <button><svg><use href="#copy"/></svg>Copy</button>
      <button><svg><use href="#stretch"/></svg>Stretch</button>
      <button><svg><use href="#rotate"/></svg>Rotate</button>
      <button><svg><use href="#mirror"/></svg>Mirror</button>
      <button><svg><use href="#scale"/></svg>Scale</button>
      <button><svg><use href="#trim"/></svg><span>Trim</span><i class="caret"></i></button>
      <button><svg><use href="#fillet"/></svg><span>Fillet</span><i class="caret"></i></button>
      <button><svg><use href="#array"/></svg><span>Array</span><i class="caret"></i></button>
      <button aria-label="Erase"><svg><use href="#erase"/></svg></button>
      <button aria-label="Explode"><svg><use href="#explode"/></svg></button>
      <button aria-label="Offset"><svg><use href="#offset"/></svg></button>
    </div>
    <h2>Modify<i class="caret big"></i></h2>
  </section>
  <section class="panel p-lay">
    <div class="pbody">
      <button class="bigbtn"><svg><use href="#layerbig"/></svg>Layer<br>Properties</button>
      <div class="layers">
        <div class="layersel"><svg><use href="#bulb"/></svg><svg><use href="#sun"/></svg><svg><use href="#lock"/></svg><span class="swatch"></span><select aria-label="Layer"><option>0</option></select><i class="caret big"></i></div>
        <div class="lrow"><svg><use href="#l1"/></svg><svg><use href="#l2"/></svg><svg><use href="#l3"/></svg><svg><use href="#l4"/></svg><button><svg><use href="#l5"/></svg>Make Current</button></div>
        <div class="lrow"><svg><use href="#l6"/></svg><svg><use href="#l7"/></svg><svg><use href="#l8"/></svg><svg><use href="#l9"/></svg><button><svg><use href="#l10"/></svg>Match Layer</button></div>
      </div>
    </div>
    <h2>Layers<i class="caret big"></i></h2>
  </section>
  <section class="panel p-clip">
    <div class="pbody">
      <button class="bigbtn pastebtn"><svg><use href="#paste"/></svg>Paste<i class="caret"></i></button>
      <div class="clips"><svg><use href="#cut"/></svg><svg><use href="#copyc"/></svg><svg><use href="#pspec"/></svg></div>
    </div>
    <h2>Clipboard</h2>
  </section>
</div>

<nav class="filetabs">
  <a href="#start">Start</a>
  <a class="on" href="#gfgh">gfgh*<svg class="i12"><use href="#close"/></svg></a>
  <button aria-label="New tab"><svg><use href="#plus"/></svg></button>
</nav>

<main class="work">
  <aside class="toolspace">
    <div class="tpanel">
      <h1><i class="grip"></i>TOOLSPACE</h1>
      <div class="ttools"><svg class="i12 first"><use href="#refresh"/></svg><svg class="i12"><use href="#tree2"/></svg><svg class="i12"><use href="#pane"/></svg><svg class="i12"><use href="#help"/></svg></div>
      <div class="viewsel"><select aria-label="View"><option>Active Drawing View</option></select><i class="chev"></i></div>
      <ul class="tree">
        <li class="root"><i class="box minus"></i><svg><use href="#t-doc"/></svg><b>gfgh</b>
          <ul>
            <li><i class="box dot"></i><svg><use href="#t-point"/></svg>Points</li>
            <li><i class="box"></i><svg><use href="#t-pg"/></svg>Point Groups</li>
            <li><svg><use href="#t-surf"/></svg>Surfaces</li>
            <li><i class="box"></i><svg><use href="#t-align"/></svg>Alignments</li>
            <li><svg><use href="#t-fl"/></svg>Feature Lines</li>
            <li><svg><use href="#t-site"/></svg>Sites</li>
            <li><svg><use href="#t-catch"/></svg>Catchments</li>
            <li><i class="box"></i><svg><use href="#t-pipe"/></svg>Pipe Networks</li>
            <li><svg><use href="#t-pipe"/></svg>Pressure Networks</li>
            <li><svg><use href="#t-corr"/></svg>Corridors</li>
            <li><i class="box"></i><svg><use href="#t-assem"/></svg>Assemblies</li>
            <li><svg><use href="#t-inter"/></svg>Intersections</li>
            <li><i class="box"></i><svg><use href="#t-survey"/></svg>Survey</li>
            <li><svg><use href="#t-vfg"/></svg>View Frame Groups</li>
          </ul>
        </li>
        <li class="root last"><i class="box minus"></i><svg><use href="#t-short"/></svg>Data Shortcuts []
          <ul>
            <li><svg><use href="#d-surf"/></svg>Surfaces</li>
            <li><i class="box"></i><svg><use href="#d-align"/></svg>Alignments</li>
            <li><svg><use href="#d-pipe"/></svg>Pipe Networks</li>
            <li><svg><use href="#d-pipe"/></svg>Pressure Networks</li>
            <li><svg><use href="#d-corr"/></svg>Corridors</li>
            <li><svg><use href="#d-vfg"/></svg>View Frame Groups</li>
          </ul>
        </li>
      </ul>
      <div class="details"></div>
    </div>
    <nav class="sidetabs"><a class="on" href="#prospector">Prospector</a><a href="#settings">Settings</a><a href="#survey">Survey</a><a href="#toolbox">Toolbox</a></nav>
  </aside>

  <div class="right">
    <div class="viewrow">
      <div class="drawing">
        <svg class="canvas" role="img" aria-label="Traverse drawing">
          <g transform="translate(-209 -158)">
            <g class="legs"><path d="M297 324L580 288L769 387L888 247L1097 303L1172 182"/></g>
            <path d="M813 324l3 -3 4 5 -3 3zM1123 252l4 -3 3 4 -4 4z" fill="#fff"/>
            <g color="#f4f4f4"><use href="#node" x="580" y="288"/><use href="#node" x="888" y="247"/><use href="#node" x="1097" y="303"/><use href="#node" x="1172" y="182"/></g>
            <g color="#f1efb4"><use href="#node" x="297" y="324"/><use href="#node" x="769" y="387"/></g>
            <g class="names"><text x="290" y="302">M8</text><text x="582" y="271">M7</text><text x="761" y="371">M6</text><text x="886" y="232">M5</text><text x="1100" y="292">M4</text><text x="1167" y="166">M3</text></g>
            <g class="bear large"><text transform="translate(438 305) rotate(-7)">S " 34.72'82"41W</text><text transform="translate(440 315) rotate(-7)">174.205</text></g>
            <g class="bear"><text transform="translate(676 337) rotate(28)">N "52.20'52"16W</text><text transform="translate(671 344) rotate(28)">129.939</text><text transform="translate(828 317) rotate(-50)">S "42.54'60"20W</text><text transform="translate(833 321) rotate(-50)">111.798</text><text transform="translate(993 275) rotate(15)">N "35.22'74"58W</text><text transform="translate(991 283) rotate(15)">132.647</text></g>
            <g class="bear tiny"><text transform="translate(1136 244) rotate(-58)">"53.19'52"38W</text><text transform="translate(1140 246) rotate(-58)">87.040</text></g>
            <g class="cross"><path d="M316 346H345M351 346H380M348 314V343M348 349V379M345 343h6v6h-6z"/></g>
            <g class="ucs"><path d="M218 361V402H260M214 398h8v8h-8z"/><text x="219" y="358">Y</text><text x="262" y="402">X</text></g>
          </g>
        </svg>
        <div class="vplabel">[−][Top][2D Wireframe]</div>
        <div class="vpbtns"><button aria-label="Minimize view"><svg class="i12"><use href="#min"/></svg></button><button aria-label="Restore view"><svg class="i12"><use href="#restore"/></svg></button><button aria-label="Close view"><svg class="i12"><use href="#close"/></svg></button></div>
        <div class="cube">
          <svg viewBox="0 0 48 48"><circle cx="24" cy="24" r="19" fill="none" stroke="#474747" stroke-width="5"/><path d="M15 15h18v18H15z" fill="#c9c9c9"/><text x="24" y="26" class="top">TOP</text><text x="24" y="8">N</text><text x="24" y="48">S</text><text x="4" y="28">W</text><text x="44" y="28">E</text></svg>
          <button class="wcs">WCS</button>
        </div>
        <div class="navbar"><svg viewBox="0 0 26 116"><g fill="none" stroke="#323232" stroke-width="1.500"><circle cx="22" cy="4" r="2"/><circle cx="13" cy="23" r="9"/><rect x="8" y="18" width="10" height="10" rx="3"/><path d="M10 40h6M10 98h6M11 108l2 2 2-2M8 66c-3-4-5-6-3-7l4 3v-9l3 1v-2l3 1v2h3v4l1 6c0 6-8 6-11 1zM4 72l14 13M17 72L4 86"/><circle cx="18" cy="83" r="4"/><path d="M20 86l3 4"/></g></svg></div>
        <div class="cmd">
          <div class="cmdside"><i class="grip wide"></i><svg class="i12"><use href="#close"/></svg><svg class="i12"><use href="#wrench"/></svg></div>
          <div class="cmdmain"><p>Pick a location for the point of closure</p><label><svg viewBox="0 0 16 12"><path d="M1 1h14v10H1z" fill="#b9b9b9" stroke="#555"/><path d="M1 2h14" stroke="#555" stroke-width="2"/><path d="M3 5l2 2-2 2M6 9h3" stroke="#444" fill="none"/></svg><i class="caret dark"></i><input type="text" value=":" aria-label="Command"><i class="caret dark big up"></i></label></div>
        </div>
      </div>
      <div class="rtools"><i class="grip wide"></i><svg><use href="#r-1"/></svg><svg><use href="#r-2"/></svg><svg><use href="#r-3"/></svg><svg><use href="#r-4"/></svg><svg><use href="#r-5"/></svg><svg><use href="#r-6"/></svg><svg><use href="#r-6"/></svg><svg><use href="#r-7"/></svg><svg><use href="#r-7a"/></svg><svg><use href="#r-7b"/></svg><svg><use href="#r-7c"/></svg><svg><use href="#r-8"/></svg><svg><use href="#r-9"/></svg></div>
    </div>
    <section class="editor">
      <div class="egrip"><i class="grip"></i></div>
      <div class="emain">
        <div class="etools">
          <svg><use href="#new"/></svg><svg><use href="#open"/></svg><svg><use href="#link"/></svg>
          <span class="sep"></span><svg class="i12"><use href="#disk"/></svg><svg class="i12"><use href="#diskp"/></svg><span class="sep"></span>
          <svg class="dim"><use href="#scales"/></svg>
          <button class="e1"><svg><use href="#plset"/></svg>Points and Lines<i class="caret dark"></i></button>
          <button class="e2"><svg><use href="#zoomx"/></svg>Zoom Extents<i class="caret dark"></i></button>
          <button class="e3"><svg><use href="#arc"/></svg>Lines and Arcs<i class="caret dark"></i></button>
          <div class="checks"><svg class="i12"><use href="#check"/></svg><svg class="i12"><use href="#help"/></svg></div>
          <span class="path">C:\Users\amirm\Desktop\travers.trv2</span>
        </div>
        <div class="tablewrap">
        <table>
          <colgroup><col class="c-n"><col class="c-side"><col class="c-occ"><col class="c-ang"><col class="c-dist"><col class="c-rad"><col class="c-arc"><col class="c-arc"><col class="c-arc"><col class="c-co"><col class="c-co"><col class="c-name"><col class="c-desc"></colgroup>
          <thead>
            <tr><th rowspan="2" aria-label="Row"></th><th rowspan="2">Side</th><th rowspan="2">Occupied Point</th><th colspan="2">Point Line Chord</th><th colspan="4">Arc</th><th colspan="2">Coordinate</th><th colspan="2">COGO Point</th></tr>
            <tr><th>Angle</th><th>Distance</th><th>Radial</th><th>Radius</th><th>Δ Angle</th><th>Length</th><th>North</th><th>East</th><th>Name</th><th>Description</th></tr>
          </thead>
          <tbody>
            <tr><td class="n"><i class="caret side dark"></i>1</td><td class="s"><select aria-label="Side 1"><option>Point</option></select><i class="chev"></i></td><td class="w">667514.6021818...</td><td class="w"></td><td></td><td></td><td></td><td></td><td></td><td>807220.5184</td><td>667514.6022</td><td class="w">2</td><td class="w"></td></tr>
            <tr><td class="n">2</td><td class="s"><select aria-label="Side 2"><option>Line</option></select><i class="chev"></i></td><td></td><td class="w">S 31°38'51.09" W</td><td class="w">87.040</td><td></td><td></td><td></td><td></td><td>807146.4220</td><td>667468.9330</td><td class="w">3</td><td class="w"></td></tr>
            <tr><td class="n">3</td><td class="s"><select aria-label="Side 3"><option>Line</option></select><i class="chev"></i></td><td></td><td class="w">N 74°58'35.22" W</td><td class="w">132.647</td><td></td><td></td><td></td><td></td><td>807180.8062</td><td>667340.8199</td><td class="w">4</td><td class="w"></td></tr>
            <tr><td class="n">4</td><td class="s"><select aria-label="Side 4"><option>Line</option></select><i class="chev"></i></td><td></td><td class="w">S 40°20'57.65" W</td><td class="w">111.798</td><td></td><td></td><td></td><td></td><td>807095.6037</td><td>667268.4367</td><td class="w">5</td><td class="w"></td></tr>
            <tr><td class="n">5</td><td class="s"><select aria-label="Side 5"><option>Line</option></select><i class="chev"></i></td><td></td><td class="w">N 62°16'52.20" W</td><td class="w">129.939</td><td></td><td></td><td></td><td></td><td>807156.0426</td><td>667153.4094</td><td class="w">6</td><td class="w"></td></tr>
            <tr><td class="n">6</td><td class="s"><select aria-label="Side 6"><option>Line</option></select><i class="chev"></i></td><td></td><td class="w">S 82°41'34.72" W</td><td class="w">174.205</td><td></td><td></td><td></td><td></td><td>807133.8862</td><td>666980.6192</td><td class="w">7</td><td class="w"></td></tr>
            <tr><td class="n"><b>*</b>7</td><td class="s"><select aria-label="Side 7"><option>Line</option></select><i class="chev"></i></td><td></td><td class="w"></td><td class="w"></td><td></td><td></td><td></td><td></td><td></td><td></td><td class="w"></td><td class="w"></td></tr>
          </tbody>
        </table>
        </div>
      </div>
    </section>
  </div>
</main>

<footer class="bottom">
  <nav class="layouts"><a class="on" href="#model">Model</a><a href="#layout1">Layout1</a><button aria-label="Add layout"><svg><use href="#plus"/></svg></button></nav>
  <div class="status">
    <div class="seg"><button class="w42">MODEL</button></div>
    <div class="seg"><button class="w20" aria-label="Grid"><svg><use href="#s-grid"/></svg></button><button class="w20" aria-label="Snap"><svg><use href="#s-snap"/></svg></button><i class="caret w10"></i></div>
    <div class="seg"><button class="w20" aria-label="Ortho"><svg><use href="#s-ortho"/></svg></button><button class="w20 on" aria-label="Polar tracking"><svg><use href="#s-polar"/></svg></button><i class="caret w10"></i><button class="w20" aria-label="Isometric"><svg><use href="#s-iso"/></svg></button><i class="caret w10"></i></div>
    <div class="seg"><button class="w20 on" aria-label="Object tracking"><svg><use href="#s-otrack"/></svg></button><button class="w20 on" aria-label="Object snap"><svg><use href="#s-osnap"/></svg></button><i class="caret w10"></i></div>
    <div class="seg"><button class="w20 on" aria-label="Annotation visibility"><svg><use href="#s-annov"/></svg></button><button class="w20" aria-label="Auto scale"><svg><use href="#s-annoa"/></svg></button><button class="w20" aria-label="Annotation"><svg><use href="#s-anno"/></svg></button><button class="scale">1:1<i class="caret big"></i></button></div>
    <div class="seg"><button class="w20" aria-label="Settings"><svg><use href="#gear"/></svg></button><i class="caret w10"></i></div>
    <div class="seg"><button class="w20" aria-label="Monitor"><svg><use href="#plus"/></svg></button></div>
    <div class="seg"><button class="w20" aria-label="Elevation"><svg><use href="#s-lay"/></svg></button><button class="w38">3.5000</button></div>
    <div class="seg"><button class="w20" aria-label="Isolate"><svg><use href="#s-units"/></svg></button></div>
    <div class="seg"><button class="w20" aria-label="Geolocation"><svg class="i18"><use href="#s-geo"/></svg></button><button class="w22" aria-label="Graphics"><svg><use href="#s-img"/></svg></button></div>
    <div class="seg"><button class="w20" aria-label="Clean screen"><svg><use href="#s-clean"/></svg></button><button class="w20" aria-label="Customize"><svg><use href="#s-menu"/></svg></button></div>
  </div>
</footer>
</div>
</body>
</html>
```
FILE: styles.css
```css
* { box-sizing: border-box; }
body { margin: 0; background: #000; color: #e4e7ec; font: 10px/14px "Noto Sans", "Open Sans", sans-serif; }
button, input, select { font: inherit; color: inherit; background: none; border: 0; padding: 0; margin: 0; appearance: none; border-radius: 0; }
a { color: inherit; text-decoration: none; }
h1, h2, p, ul { margin: 0; padding: 0; font-weight: 400; font-size: 10px; list-style: none; }
svg { display: block; flex: none; width: 14px; height: 14px; }
.defs { position: absolute; width: 0; height: 0; }
.i12 { width: 12px; height: 12px; }
.i14 { width: 14px; height: 14px; }
.i18 { width: 18px; height: 18px; }

.caret { flex: none; width: 0; height: 0; border: 2px solid transparent; border-top: 3px solid #e4e7ec; border-bottom: 0; }
.caret.big { border-width: 4px 3px 0; }
.caret.side { border: 3px solid transparent; border-left: 4px solid #e4e7ec; border-right: 0; }
.caret.dark { border-top-color: #222; }
.caret.side.dark { border-top-color: transparent; border-left-color: #222; }
.caret.up { transform: rotate(180deg); }
.grip { flex: none; width: 3px; height: 7px; background: repeating-linear-gradient(#9aa2b0 0 1px, transparent 1px 3px); }
.grip.wide { width: 14px; height: 5px; background: linear-gradient(transparent 0 2px, #444b59 2px 3px, transparent 3px), repeating-linear-gradient(90deg, #a4abb8 0 2px, transparent 2px 3px); }
.chev { width: 5px; height: 5px; border: solid #777; border-width: 0 1px 1px 0; transform: rotate(45deg); }

.app { height: 100vh; min-height: 600px; padding: 15px 0 16px; display: flex; flex-direction: column; overflow: hidden; }

/* title bar */
.titlebar { flex: none; display: grid; grid-template: 19px 17px / 37px 1fr; background: linear-gradient(#3a4150, #343b4a); }
.appmenu { grid-row: 1 / 3; position: relative; width: 32px; height: 32px; background: linear-gradient(#c4c7cb, #8f9399); }
.appmenu .logo { width: 22px; height: 22px; margin: 0 0 0 2px; }
.appmenu b { display: block; color: #111; font: 700 7px/8px "Noto Sans", sans-serif; }
.appmenu .caret { position: absolute; right: 3px; top: 13px; border-top-color: #333; }
.titlerow { display: flex; align-items: center; height: 17px; color: #f1f3f6; }
.qat { display: grid; grid-template-columns: repeat(7, 20px); justify-items: center; padding-right: 1px; }
.redo { color: #828a98; margin: 0 8px; }
.workspace { display: flex; align-items: center; width: 149px; height: 17px; margin-left: 2px; padding: 0 2px 0 3px; background: #515b6e; }
.workspace select { flex: 1; }
.over { margin-left: 4px; border-top-width: 4px; }
.apptitle { flex: 1; display: flex; justify-content: center; gap: 10px; padding-left: 6px; white-space: nowrap; }
.search { width: 149px; height: 17px; margin-left: 4px; padding: 0 3px; background: #667084; color: #dfe3ea; font-style: italic; }
.search::placeholder { color: #d3d7de; opacity: 1; }
.account { display: flex; align-items: center; gap: 6px; width: 112px; padding-left: 4px; }
.account svg + svg { margin-left: 2px; }
.links { display: flex; align-items: center; gap: 6px; padding: 0 7px 0 9px; }
.helpbox { display: flex; align-items: center; gap: 8px; height: 14px; padding-left: 8px; border-left: 1px solid #555d6c; }
.helpbtn { width: 12px; height: 12px; border-radius: 6px; background: #f1f5fb; color: #2c5fa8; font: 700 10px/12px "Noto Sans", sans-serif; text-align: center; }
.winbtns { display: flex; gap: 8px; width: 108px; justify-content: flex-end; }
.menu { display: grid; grid-template-columns: 43px 41px 57px 49px 51px 37px 53px 46px 46px 32px 70px 62px 70px 35px 53px 73px 82px 40px; text-align: center; line-height: 14px; color: #ccd1d9; white-space: nowrap; }
.menu a { padding-top: 1px; height: 16px; margin-top: 1px; line-height: 13px; }
.menu a.on { background: #4d5669; color: #f3f4f7; }
.ribmin { display: flex; align-items: center; gap: 6px; padding-left: 18px; }
.ribmin span { width: 11px; height: 7px; border-radius: 2px; background: #e1e4e9; }

/* ribbon */
.ribbon { flex: none; display: flex; background: linear-gradient(#384050, #343c4a); }
.panel { display: flex; flex-direction: column; background: linear-gradient(#4b556a, #565f73 50%, #525b6e); border-right: 1px solid #414a5b; white-space: nowrap; }
.panel h2 { display: flex; align-items: center; justify-content: center; gap: 6px; height: 15px; line-height: 14px; }
.pbody { display: flex; height: 66px; padding-top: 2px; }
.p-pal { width: 95px; }
.p-ground { width: 109px; }
.p-design { width: 269px; }
.p-prof { width: 113px; }
.p-draw { width: 99px; }
.p-mod { width: 212px; }
.p-lay { width: 228px; }
.p-clip { width: 65px; border-right: 0; }
.toolspacebtn { width: 50px; height: 61px; margin: 0 0 0 1px; padding-bottom: 12px; display: flex; flex-direction: column; align-items: center; gap: 2px; background: #3f5e86; border: 1px solid #6fb3ea; }
.toolspacebtn svg { width: 30px; height: 30px; }
.six { display: grid; grid-template: repeat(3, 20px) / repeat(2, 20px); gap: 1px 0; }
.six button { display: grid; place-items: center; height: 19px; }
.six .on { border: 1px solid #6fb3ea; background: #435a7d; }
.cols { display: grid; grid-auto-flow: column; grid-template-rows: repeat(3, 21px); justify-content: start; }
.cols button { display: flex; align-items: center; gap: 4px; height: 20px; }
.cols .caret { margin-left: 2px; }
.p-ground .cols { padding-left: 20px; }
.p-design .cols { padding-left: 5px; grid-template-columns: 89px 81px 90px; }
.p-design .cols .caret { margin-left: 1px; }
.p-prof .cols { padding-left: 10px; }
.p-draw .cols { padding-left: 4px; grid-template-columns: 31px 33px 30px; }
.p-draw .cols .caret { margin-left: 1px; }
.p-mod .cols { padding-left: 5px; grid-template-columns: 61px 58px 64px 20px; }
.p-mod .cols span { width: 26px; text-align: left; }
.bigbtn { display: flex; flex-direction: column; align-items: center; width: 52px; line-height: 14px; text-align: center; }
.bigbtn svg { width: 30px; height: 30px; margin-bottom: 2px; }
.p-lay .bigbtn { display: block; line-height: 13px; padding-bottom: 4px; }
.p-lay .bigbtn svg { margin-left: 11px; }
.layers { display: grid; grid-template-rows: 21px 21px 21px; align-items: center; }
.layersel { display: flex; align-items: center; gap: 2px; width: 173px; height: 17px; padding: 0 4px 0 2px; background: #68758f; }
.layersel select { flex: 1; padding-left: 3px; }
.swatch { width: 12px; height: 12px; margin-left: 2px; background: #fff; border: 1px solid #333; }
.lrow { display: flex; gap: 6px; padding-left: 2px; }
.lrow button { display: flex; align-items: center; gap: 4px; }
.pastebtn { width: 44px; padding-top: 2px; }
.pastebtn svg { width: 24px; height: 28px; }
.pastebtn .caret { margin-top: 4px; }
.clips { display: grid; grid-template-rows: repeat(3, 21px); align-items: center; }

/* file tabs */
.filetabs { flex: none; display: flex; height: 25px; padding: 4px 0 0 15px; background: linear-gradient(#343c4a, #373f4d); border-bottom: 3px solid #505a6d; color: #c3c9d3; }
.filetabs a { display: flex; justify-content: space-between; align-items: center; width: 104px; height: 18px; padding: 0 8px 0 10px; background: #3b4351; border-radius: 8px 8px 0 0; }
.filetabs .on { background: #505a6d; color: #eceef2; }
.filetabs button { width: 22px; display: grid; place-items: center; margin-left: 4px; }
.filetabs button svg { width: 8px; height: 8px; }

/* work area */
.work { flex: 1; min-height: 0; display: flex; background: #424b5f; }
.toolspace { flex: none; width: 209px; display: flex; background: #434d61; }
.tpanel { width: 189px; display: flex; flex-direction: column; }
.tpanel h1 { display: flex; align-items: center; gap: 5px; height: 18px; margin-top: 2px; padding-left: 4px; background: #343c4c; color: #dfe3ea; }
.ttools { flex: none; display: flex; align-items: center; gap: 9px; height: 24px; padding: 0 5px 0 3px; }
.ttools .first { margin-right: auto; }
.viewsel { flex: none; display: flex; align-items: center; height: 17px; padding-right: 5px; background: #e4e4e4; color: #222; border-bottom: 1px solid #8b8f97; }
.viewsel select { flex: 1; padding-left: 1px; font-size: 9px; }
.tree { flex: 1; min-height: 0; overflow: hidden; margin-top: 2px; padding-top: 1px; background: #fff; color: #222; font-size: 9px; line-height: 16px; white-space: nowrap; }
.tree svg, .tree .box { display: inline-block; vertical-align: middle; }
.tree svg { width: 12px; height: 12px; margin: 0 4px 0 2px; }
.tree b { font-size: 10px; color: #000; }
.tree .root { padding-left: 14px; background: linear-gradient(#aaa, #aaa) 8px 8px / 1px 100% no-repeat; }
.tree .root.last { background: none; }
.tree .root > .box { margin-left: -9px; }
.tree ul { background: linear-gradient(#bbb, #bbb) 7px 0 / 1px calc(100% - 8px) no-repeat; }
.tree ul li { position: relative; height: 16px; padding-left: 12px; font-size: 9px; background: linear-gradient(#bbb, #bbb) 7px 8px / 6px 1px no-repeat; }
.tree ul .box { position: absolute; left: 4px; top: 4px; }
.box { width: 7px; height: 7px; border: 1px solid #999; background: linear-gradient(#666, #666) center / 5px 1px no-repeat, linear-gradient(#666, #666) center / 1px 5px no-repeat, #fff; }
.box.minus { background: linear-gradient(#666, #666) center / 5px 1px no-repeat, #fff; }
.box.dot { border-color: #ccc; background: #333; }
.details { flex: none; height: 63px; margin: 5px 0 5px; border: 1px solid #8a93a3; border-left: 0; background: #3c4558; }
.sidetabs { width: 17px; height: 430px; margin-top: 22px; display: grid; grid-template-rows: repeat(4, 1fr); background: #30384a; border-radius: 0 4px 4px 0; }
.sidetabs a { writing-mode: vertical-rl; transform: rotate(180deg); text-align: center; line-height: 17px; color: #aab0bc; }
.sidetabs .on { background: #434d61; color: #d7dbe2; }

.right { flex: 1; min-width: 0; display: flex; flex-direction: column; }
.viewrow { flex: 1; min-height: 0; display: flex; border-top: 1px solid #222834; }
.drawing { flex: 1; min-width: 0; position: relative; overflow: hidden; background: #000; }
.canvas { width: 100%; height: 100%; }
.legs { fill: none; stroke: #ededed; stroke-width: 1.500; }
.names { fill: #34a04a; font: 9px "DejaVu Sans Mono", monospace; }
.bear { fill: #ececec; font: 7px "Liberation Sans", sans-serif; text-anchor: middle; }
.bear.large { font-size: 10px; }
.bear.tiny { font-size: 6px; }
.cross { fill: none; stroke: #c7c7c7; }
.ucs { fill: none; stroke: #a8a8a8; }
.ucs text { fill: #bbb; stroke: none; font: 14px "Liberation Sans", sans-serif; }
.vplabel { position: absolute; left: 3px; top: 3px; color: #d6d6d6; }
.vpbtns { position: absolute; right: 7px; top: 6px; display: flex; gap: 4px; color: #f2f2f2; }
.cube { position: absolute; right: 5px; top: 25px; width: 52px; display: grid; justify-items: center; gap: 7px; }
.cube svg { width: 48px; height: 48px; overflow: visible; }
.cube text { fill: #ccc; font: 700 8px "Noto Sans", sans-serif; text-anchor: middle; }
.cube .top { fill: #555; font-size: 6px; }
.wcs { width: 38px; height: 14px; border-radius: 4px; background: #a7a5ae; color: #eee; text-align: left; padding-left: 4px; line-height: 14px; }
.navbar { position: absolute; right: 3px; top: 115px; width: 27px; height: 117px; background: #606060; border-radius: 2px; }
.navbar svg { width: 26px; height: 116px; }
.cmd { position: absolute; left: 269px; bottom: 1px; width: 515px; height: 42px; display: flex; }
.cmdside { width: 20px; display: flex; flex-direction: column; align-items: center; justify-content: space-between; padding: 3px 0 1px; background: #32353f; color: #d5d7dc; }
.cmdmain { flex: 1; display: grid; grid-template-rows: 24px 18px; }
.cmdmain p { padding: 5px 2px 0; background: rgba(208, 174, 0, .86); color: #111; font: 700 13px/20px "DejaVu Sans Mono", monospace; white-space: nowrap; }
.cmdmain label { display: flex; align-items: center; gap: 2px; padding: 0 4px 0 3px; background: #aaa; color: #111; border-top: 1px solid #777; }
.cmdmain label svg { width: 14px; height: 10px; }
.cmdmain input { flex: 1; font: 700 13px/16px "DejaVu Sans Mono", monospace; }
.rtools { flex: none; width: 19px; display: flex; flex-direction: column; align-items: flex-start; gap: 5px; padding: 2px 0 0 3px; overflow: hidden; background: #4b5569; border-left: 3px solid #394252; }
.rtools .grip { margin-bottom: -4px; }

/* traverse editor */
.editor { flex: none; height: 253px; display: flex; border-top: 2px solid #4f586b; }
.egrip { width: 14px; padding: 5px 0 0 4px; background: #2d3546; }
.emain { flex: 1; min-width: 0; background: #ececec; }
.etools { display: flex; align-items: center; gap: 2px; height: 17px; padding-left: 2px; background: #646464; color: #e2e2e2; white-space: nowrap; }
.etools .sep { width: 1px; height: 15px; margin: 0 1px; background: #505050; }
.etools button { display: flex; align-items: center; gap: 3px; height: 17px; border-left: 1px solid #555; padding-left: 3px; }
.etools .caret { margin-left: auto; }
.e1 { width: 102px; }
.e2 { width: 92px; }
.e3 { width: 94px; }
.dim { color: #aaa; }
.checks { display: flex; gap: 4px; padding: 0 6px 0 3px; }
.tablewrap { padding: 11px 0 0 4px; overflow: hidden; }
table { width: calc(100% + 4px); height: 149px; table-layout: fixed; border-collapse: collapse; color: #2a2a2a; }
th, td { padding: 0; border: 1px solid #a3a3a3; font-weight: 400; white-space: nowrap; overflow: hidden; }
th { height: 13px; line-height: 12px; vertical-align: bottom; }
td { height: 17px; padding: 1px 0 0 3px; font-size: 9px; line-height: 14px; background: #ebebeb; }
td.w { background: #fff; }
td.n { text-align: right; padding-right: 1px; }
td.n .caret { float: left; margin: 4px 0 0 2px; }
td.n b { float: left; margin-left: 2px; font-size: 11px; }
td.s { position: relative; background: #e0e0e0; padding: 0; }
td.s select { display: block; width: 100%; height: 16px; padding: 1px 0 0 3px; font-size: 9px; line-height: 14px; background: linear-gradient(#bbb, #bbb) 38px 0 / 1px 100% no-repeat; }
td.s .chev { position: absolute; right: 5px; top: 4px; }
.c-n { width: 27px; }
.c-side { width: 54px; }
.c-occ { width: 100px; }
.c-ang { width: 138px; }
.c-dist { width: 72px; }
.c-rad { width: 95px; }
.c-arc { width: 94px; }
.c-co { width: 63px; }
.c-name { width: 69px; }

/* bottom */
.bottom { flex: none; height: 39px; background: #222934; }
.layouts { display: flex; height: 16px; padding-left: 8px; line-height: 15px; color: #b4bac5; }
.layouts a { width: 48px; text-align: center; background: #2c3443; border-radius: 0 0 7px 7px; }
.layouts a + a { width: 51px; margin-left: 3px; }
.layouts .on { background: #3c4558; color: #fff; font-weight: 700; }
.layouts button { width: 24px; display: grid; place-items: center; margin-left: 2px; }
.layouts button svg { width: 8px; height: 8px; }
.status { display: flex; justify-content: flex-end; gap: 2px; height: 21px; margin-top: 1px; color: #eceef2; }
.seg { display: flex; align-items: center; background: #303849; }
.seg button { display: grid; place-items: center; height: 20px; }
.seg .on { background: #4a7ebd; }
.w42 { width: 42px; }
.w38 { width: 38px; }
.w22 { width: 22px; }
.w20 { width: 20px; }
.seg > .w10 { margin: 0 5px 0 4px; }
.seg .scale { display: flex; align-items: center; gap: 4px; width: 28px; }
```
